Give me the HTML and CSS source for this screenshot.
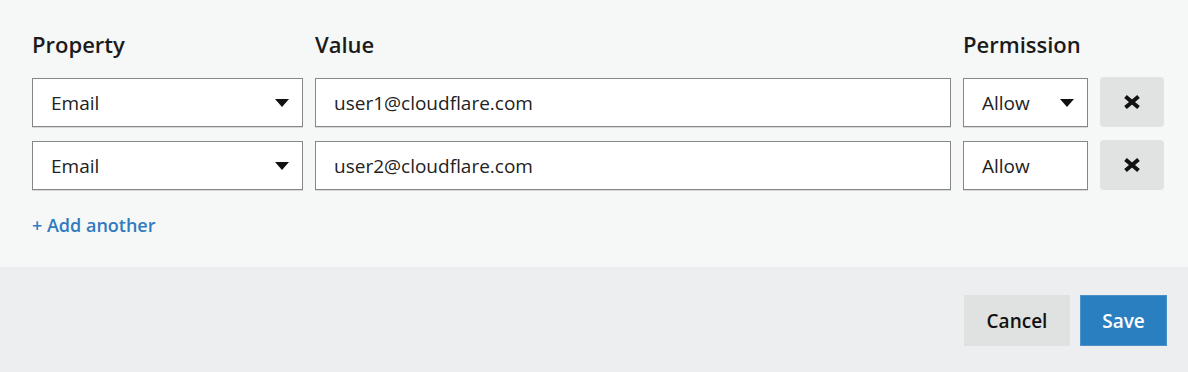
FILE: index.html
```html
<!DOCTYPE html>
<html lang="en">
<head>
    <meta charset="UTF-8">
    <meta name="viewport" content="width=device-width, initial-scale=1.0">
    <title>Access Rules</title>
    <link rel="stylesheet" href="styles.css">
</head>
<body>
    <div class="rules-panel">
        <div class="rule-grid labels">
            <div class="label">Property</div>
            <div class="label">Value</div>
            <div class="label">Permission</div>
            <div></div>
        </div>

        <div class="rule-grid rule-row">
            <div class="field select">
                <span>Email</span>
                <svg class="caret" width="14" height="8" viewBox="0 0 14 8"><path d="M0 0h14L7 8z"/></svg>
            </div>
            <input class="field" type="text" value="user1@cloudflare.com">
            <div class="field select">
                <span>Allow</span>
                <svg class="caret" width="14" height="8" viewBox="0 0 14 8"><path d="M0 0h14L7 8z"/></svg>
            </div>
            <button class="remove-btn" type="button" aria-label="Remove">
                <svg width="18" height="16" viewBox="0 0 18 16"><path d="M2.5 2.5l13 11M15.5 2.5l-13 11"/></svg>
            </button>
        </div>

        <div class="rule-grid rule-row">
            <div class="field select">
                <span>Email</span>
                <svg class="caret" width="14" height="8" viewBox="0 0 14 8"><path d="M0 0h14L7 8z"/></svg>
            </div>
            <input class="field" type="text" value="user2@cloudflare.com">
            <div class="field select">
                <span>Allow</span>
            </div>
            <button class="remove-btn" type="button" aria-label="Remove">
                <svg width="18" height="16" viewBox="0 0 18 16"><path d="M2.5 2.5l13 11M15.5 2.5l-13 11"/></svg>
            </button>
        </div>

        <a class="add-link" href="#">+ Add another</a>
    </div>

    <div class="footer">
        <button class="btn btn-cancel" type="button">Cancel</button>
        <button class="btn btn-save" type="button">Save</button>
    </div>
</body>
</html>
```

FILE: styles.css
```css
body {
    margin: 0;
    font-family: "Open Sans", "Liberation Sans", sans-serif;
    color: #1d1d1d;
    background-color: #edeef0;
}

.rules-panel {
    background: #f6f7f7;
    padding: 30px 24px 30px 32px;
}

.rule-grid {
    display: grid;
    grid-template-columns: 271px 1fr 125px 64px;
    column-gap: 12px;
}

.labels {
    margin-bottom: 20px;
}

.label {
    font-size: 22px;
    line-height: 28px;
    font-weight: 600;
    color: #1b1b1b;
}

.rule-row {
    height: 49px;
    margin-bottom: 14px;
}

.rule-row:last-of-type {
    margin-bottom: 0;
}

.field {
    box-sizing: border-box;
    height: 49px;
    width: 100%;
    margin: 0;
    padding: 0 18px;
    border: 1px solid #878787;
    border-radius: 0;
    background: #fff;
    box-shadow: 0 1px 0 rgba(0,0,0,0.12);
    font-family: inherit;
    font-size: 19px;
    color: #222;
    outline: none;
}

.select {
    display: flex;
    align-items: center;
    justify-content: space-between;
    padding-right: 13px;
}

.caret {
    fill: #111;
    display: block;
}

.remove-btn {
    height: 50px;
    margin-top: -1px;
    border: none;
    border-radius: 4px;
    background: #e1e2e2;
    display: flex;
    align-items: center;
    justify-content: center;
    cursor: pointer;
    padding: 0;
}

.remove-btn svg {
    stroke: #111;
    stroke-width: 4;
    display: block;
}

.add-link {
    display: inline-block;
    margin-top: 23px;
    font-size: 18px;
    line-height: 24px;
    font-weight: 600;
    color: #2f7bbf;
    text-decoration: none;
}

.footer {
    display: flex;
    justify-content: flex-end;
    gap: 10px;
    padding: 28px 21px 26px;
}

.btn {
    height: 51px;
    border: 1px solid transparent;
    border-radius: 0;
    font-family: inherit;
    font-size: 19px;
    font-weight: 600;
    cursor: pointer;
    padding: 0;
}

.btn-cancel {
    width: 106px;
    background: #e0e1e1;
    color: #111;
}

.btn-save {
    width: 87px;
    background: #2a7fc0;
    border-color: #4b90c9;
    color: #fff;
}
```
